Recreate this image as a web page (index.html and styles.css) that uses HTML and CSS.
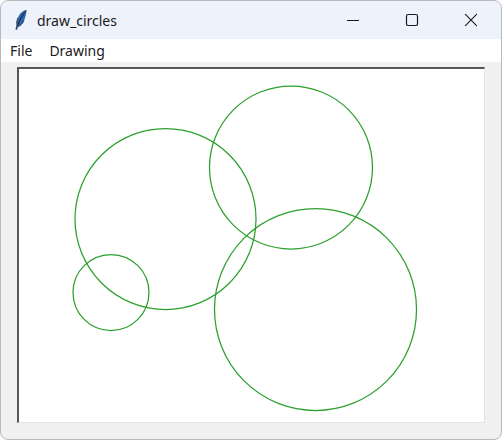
FILE: index.html
```html
<!DOCTYPE html>
<html lang="en">
<head>
<meta charset="utf-8">
<title>draw_circles</title>
<link rel="stylesheet" href="styles.css">
</head>
<body>
<div class="window">
  <header class="titlebar">
    <svg class="app-icon" width="16" height="26" viewBox="0 0 16 26">
      <path d="M13.5 3C10 3.500 6.500 6.500 4.800 11C3.800 13.800 3.400 16 4 18.500L3 22.500L4.200 22.800L5.200 19.500C7.500 19 9.500 16.500 11 13.500C12.500 10 13.300 6.500 13.500 3Z" fill="#2b65ab"/>
      <path d="M13 3.500C9.500 8 6.500 13 4.600 19" stroke="#14233d" stroke-width="1" fill="none"/>
      <path d="M4.800 11C3.800 13.800 3.400 16 4 18.500L3 22.500" stroke="#454f5e" stroke-width="1.200" fill="none"/>
      <path d="M11 13.500C9.500 16.500 7.500 19 5.200 19.500" stroke="#1d3d6b" stroke-width="1" fill="none"/>
    </svg>
    <span class="title">draw_circles</span>
    <div class="controls">
      <span class="control"><svg width="14" height="14" viewBox="0 0 14 14"><path d="M1 7.500H13" stroke="#1a1a1a" stroke-width="1.100"/></svg></span>
      <span class="control"><svg width="14" height="14" viewBox="0 0 14 14"><rect x="1.500" y="1.500" width="11" height="11" rx="1.600" fill="none" stroke="#1a1a1a" stroke-width="1.200"/></svg></span>
      <span class="control"><svg width="14" height="14" viewBox="0 0 14 14"><path d="M1.200 1.200L12.800 12.800M12.800 1.200L1.200 12.800" stroke="#1a1a1a" stroke-width="1.100"/></svg></span>
    </div>
  </header>
  <nav class="menubar">
    <span class="menu-item">File</span>
    <span class="menu-item">Drawing</span>
  </nav>
  <main class="content">
    <svg class="canvas" width="465" height="353" viewBox="19 69 465 353">
      <g fill="none" stroke="#2ca02c" stroke-width="1.250">
        <circle cx="165.500" cy="219" r="90.500"/>
        <circle cx="291" cy="167.500" r="81.500"/>
        <circle cx="315.500" cy="309.500" r="101"/>
        <circle cx="111" cy="292.500" r="38"/>
      </g>
    </svg>
  </main>
</div>
</body>
</html>
```
FILE: styles.css
```css
html, body {
  margin: 0;
  padding: 0;
  background: #fff;
}
body {
  width: 502px;
  height: 440px;
  overflow: hidden;
  font-family: "Open Sans", "Noto Sans", sans-serif;
}
.window {
  box-sizing: border-box;
  width: 502px;
  height: 440px;
  display: flex;
  flex-direction: column;
  border: 1px solid #b9b9b9;
  border-radius: 8px;
  overflow: hidden;
  background: #f0f0f0;
}
.titlebar {
  height: 38px;
  flex: none;
  display: flex;
  align-items: center;
  background: #eef2fb;
  padding-left: 12px;
}
.app-icon {
  flex: none;
}
.title {
  margin-left: 8px;
  font-family: "Noto Sans", "Open Sans", sans-serif;
  font-size: 14px;
  color: #1a1a1a;
}
.controls {
  margin-left: auto;
  display: flex;
  padding-right: 1px;
}
.control {
  width: 59px;
  display: flex;
  justify-content: center;
}
.menubar {
  height: 23px;
  flex: none;
  display: flex;
  align-items: center;
  gap: 17px;
  background: #fff;
  padding-left: 9px;
  font-family: "Noto Sans", "Open Sans", sans-serif;
  font-size: 14px;
  color: #1a1a1a;
}
.content {
  flex: 1;
  padding: 5px 0 0 16px;
}
.canvas {
  display: block;
  box-sizing: content-box;
  background: #fff;
  border-top: 2px solid #555;
  border-left: 2px solid #555;
  border-right: 1px solid #e3e3e3;
  border-bottom: 1px solid #e3e3e3;
}
```
